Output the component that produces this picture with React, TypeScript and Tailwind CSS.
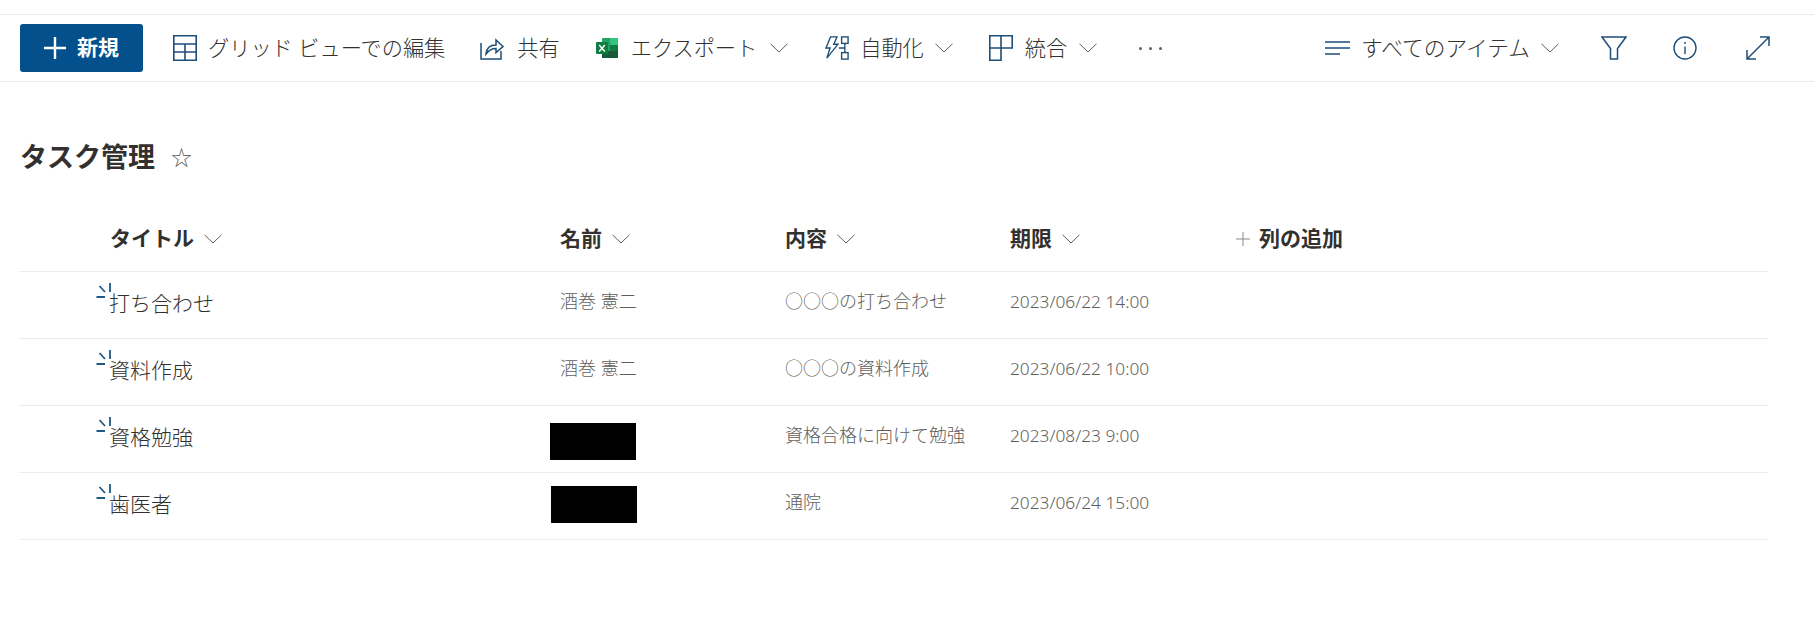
import React from 'react';

const FONT = "font-['Noto_Sans','Noto_Sans_CJK_JP',sans-serif]";

const Chevron: React.FC<{ className?: string }> = ({ className = 'w-[18px] h-[10px] text-[#605e5c]' }) => (
  <svg viewBox="0 0 18 10" className={className} fill="none" stroke="currentColor" strokeWidth="1">
    <path d="M0.5 0.8 L9 9 L17.5 0.8" />
  </svg>
);

const GridIcon = () => (
  <svg viewBox="0 0 24 26" className="w-6 h-[26px] text-[#1f4e79]" fill="none" stroke="currentColor" strokeWidth="1.6">
    <path d="M0.8 0.8 H23.2 V25.2 H0.8 Z M0.8 9 H23.2 M0.8 17 H23.2 M12 9 V25.2" />
  </svg>
);

const ShareIcon = () => (
  <svg viewBox="0 0 24 24" className="w-6 h-6 text-[#1f4e79]" fill="none" stroke="currentColor" strokeWidth="1.5">
    <path d="M1 7 V23 H21 V15" />
    <path d="M6 18 C6.5 12 10 9 16 9 V4 L23 10.5 L16 16.5 V12.5 C12 12.5 9 14 6 18 Z" />
  </svg>
);

const ExcelIcon = () => (
  <svg viewBox="0 0 22 22" className="w-[22px] h-[22px]">
    <rect x="6" y="1" width="16" height="20" rx="1" fill="#21a366" />
    <rect x="14" y="1" width="8" height="7" fill="#33c481" />
    <rect x="14" y="8" width="8" height="7" fill="#107c41" />
    <rect x="6" y="14" width="16" height="7" fill="#185c37" />
    <rect x="0" y="5" width="12" height="12" rx="1" fill="#107c41" />
    <path d="M3.2 8 L8.8 14.5 M8.8 8 L3.2 14.5" stroke="#fff" strokeWidth="1.4" />
  </svg>
);

const AutomateIcon = () => (
  <svg viewBox="0 0 26 26" className="w-6 h-[26px] text-[#1f4e79]" fill="none" stroke="currentColor" strokeWidth="1.5">
    <path d="M6 1 H13 L9.5 9 H14 L2 24 L5.5 13 H1 Z" />
    <rect x="18" y="1" width="7" height="7" />
    <rect x="18" y="18" width="7" height="7" />
    <path d="M21.5 8 V18 M15 13 H21.5" />
  </svg>
);

const MergeIcon = () => (
  <svg viewBox="0 0 24 26" className="w-6 h-[26px] text-[#1f4e79]" fill="none" stroke="currentColor" strokeWidth="1.6">
    <path d="M0.8 0.8 H23.2 V13 H12 V25.2 H0.8 Z M12 0.8 V13 M0.8 13 H12" />
  </svg>
);

const ViewIcon = () => (
  <svg viewBox="0 0 25 16" className="w-[25px] h-4 text-[#1f4e79]" fill="none" stroke="currentColor" strokeWidth="1.6">
    <path d="M0 2 H25 M0 8 H25 M0 14 H15" />
  </svg>
);

const FilterIcon = () => (
  <svg viewBox="0 0 26 24" className="w-[26px] h-6 text-[#1f4e79]" fill="none" stroke="currentColor" strokeWidth="1.5">
    <path d="M1 1 H25 L16.5 12.5 V23 H9.5 V12.5 Z" />
  </svg>
);

const InfoIcon = () => (
  <svg viewBox="0 0 24 24" className="w-6 h-6 text-[#1f4e79]" fill="none" stroke="currentColor" strokeWidth="1.4">
    <circle cx="12" cy="12" r="11" />
    <path d="M12 10.5 V18 M12 6 V8" />
  </svg>
);

const ExpandIcon = () => (
  <svg viewBox="0 0 24 24" className="w-6 h-6 text-[#1f4e79]" fill="none" stroke="currentColor" strokeWidth="1.5">
    <path d="M1 23 L23 1 M14 1 H23 V10 M1 14 V23 H10" />
  </svg>
);

// 一覧の「新着」マーク
const NewMark = () => (
  <svg viewBox="0 0 15 16" className="absolute left-[-13px] top-[-6px] w-[15px] h-4 text-[#1f5a85]" fill="none" stroke="currentColor" strokeWidth="1.8">
    <path d="M0.5 14 H9 M3.5 3 L9 9 M14 0 V9" />
  </svg>
);

const PlusIcon = () => (
  <svg viewBox="0 0 20 20" className="w-[22px] h-[22px]" fill="none" stroke="currentColor" strokeWidth="2.2">
    <path d="M10 0 V20 M0 10 H20" />
  </svg>
);

const rows = [
  { title: '打ち合わせ', name: '酒巻 憲二', body: '○○○の打ち合わせ', due: '2023/06/22 14:00', redact: '' },
  { title: '資料作成', name: '酒巻 憲二', body: '○○○の資料作成', due: '2023/06/22 10:00', redact: '' },
  { title: '資格勉強', name: '', body: '資格合格に向けて勉強', due: '2023/08/23 9:00', redact: 'ml-[-10px] mt-[4px]' },
  { title: '歯医者', name: '', body: '通院', due: '2023/06/24 15:00', redact: 'ml-[-9px] mb-[4px]' },
];

const HeaderCell: React.FC<{ label: string; className?: string }> = ({ label, className = '' }) => (
  <div className={`flex items-center gap-[10px] ${className}`}>
    <span className="font-bold text-[#323130]">{label}</span>
    <Chevron />
  </div>
);

export default function App() {
  return (
    <div className={`${FONT} w-full h-screen bg-white overflow-hidden text-[#323130]`}>
      <div className="mt-[14px] h-[68px] border-y border-[#edebe9] flex items-center pl-5 text-[21.2px] font-light">
        <button className="w-[123px] h-[48px] bg-[#03508c] rounded-[3px] text-white flex items-center justify-center gap-[11px] font-bold text-[21px]">
          <PlusIcon />
          <span>新規</span>
        </button>
        <div className="flex items-center gap-[11px] ml-[30px]"><GridIcon /><span>グリッド ビューでの編集</span></div>
        <div className="flex items-center gap-[13px] ml-[35px]"><ShareIcon /><span>共有</span></div>
        <div className="flex items-center gap-[13px] ml-[36px]"><ExcelIcon /><span>エクスポート</span><Chevron /></div>
        <div className="flex items-center gap-[11px] ml-[37px]"><AutomateIcon /><span>自動化</span><Chevron /></div>
        <div className="flex items-center gap-[12px] ml-[36px]"><MergeIcon /><span>統合</span><Chevron /></div>
        <div className="ml-[42px] flex gap-[7px]">
          <span className="w-[3px] h-[3px] rounded-full bg-[#605e5c]" />
          <span className="w-[3px] h-[3px] rounded-full bg-[#605e5c]" />
          <span className="w-[3px] h-[3px] rounded-full bg-[#605e5c]" />
        </div>
        <div className="ml-auto flex items-center pr-[44px]">
          <div className="flex items-center gap-[11px]"><ViewIcon /><span className="text-[21.7px]">すべてのアイテム</span><Chevron /></div>
          <div className="ml-[42px]"><FilterIcon /></div>
          <div className="ml-[46px]"><InfoIcon /></div>
          <div className="ml-[49px]"><ExpandIcon /></div>
        </div>
      </div>

      <div className="mt-[57px] pl-5 flex items-center gap-[16px]">
        <h1 className="text-[27px] font-bold text-[#323130] leading-[36px]">タスク管理</h1>
        <span className="text-[21px] leading-none text-[#605e5c]">☆</span>
      </div>

      <div className="mt-[31px] ml-[19px] mr-[46px] text-[21px]">
        <div className="grid grid-cols-[541px_225px_225px_226px_1fr] h-[66px] items-center border-b border-[#edebe9]">
          <HeaderCell label="タイトル" className="pl-[91px]" />
          <HeaderCell label="名前" />
          <HeaderCell label="内容" />
          <HeaderCell label="期限" />
          <div className="flex items-center gap-[9px]">
            <svg viewBox="0 0 14 14" className="w-[14px] h-[14px] text-[#8a8886]" fill="none" stroke="currentColor" strokeWidth="1">
              <path d="M7 0 V14 M0 7 H14" />
            </svg>
            <span className="font-bold text-[#323130]">列の追加</span>
          </div>
        </div>
        {rows.map((row) => (
          <div
            key={row.title}
            className="grid grid-cols-[541px_225px_225px_226px_1fr] h-[67px] items-center border-b border-[#edebe9] text-[18px] text-[#605e5c] font-light"
          >
            <div className="pl-[90px] pb-[3px]">
              <span className="relative text-[21px] text-[#323130]">
                <NewMark />
                {row.title}
              </span>
            </div>
            <div className={row.name ? 'pb-[7px]' : ''}>
              {row.name ? row.name : <div className={`w-[86px] h-[37px] bg-black ${row.redact}`} />}
            </div>
            <div className="pb-[7px]">{row.body}</div>
            <div className="pb-[7px] text-[17.3px]">{row.due}</div>
            <div />
          </div>
        ))}
      </div>
    </div>
  );
}
